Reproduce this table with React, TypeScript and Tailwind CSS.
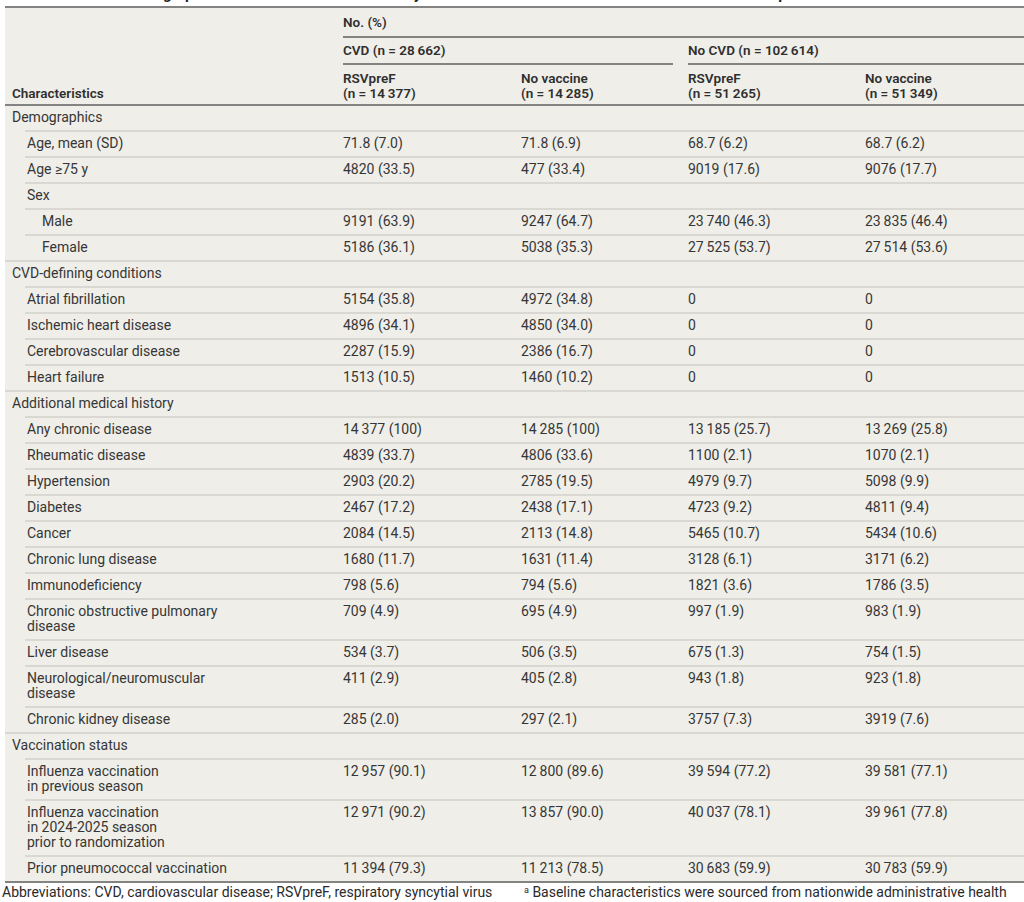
import React from "react";

type R = {
  label: string[];
  level: 1 | 2;
  v?: string[];
  full?: boolean;
  lastTable?: boolean;
};

type Section = { title: string; rows: R[] };

const t = (s: string) => s.replace(/(\d) (\d)/g, "$1\u2009$2");

const sections: Section[] = [
  {
    title: "Demographics",
    rows: [
      { label: ["Age, mean (SD)"], level: 1, v: ["71.8 (7.0)", "71.8 (6.9)", "68.7 (6.2)", "68.7 (6.2)"] },
      { label: ["Age \u226575 y"], level: 1, v: ["4820 (33.5)", "477 (33.4)", "9019 (17.6)", "9076 (17.7)"] },
      { label: ["Sex"], level: 1 },
      { label: ["Male"], level: 2, v: ["9191 (63.9)", "9247 (64.7)", "23 740 (46.3)", "23 835 (46.4)"] },
      { label: ["Female"], level: 2, v: ["5186 (36.1)", "5038 (35.3)", "27 525 (53.7)", "27 514 (53.6)"], full: true },
    ],
  },
  {
    title: "CVD-defining conditions",
    rows: [
      { label: ["Atrial fibrillation"], level: 1, v: ["5154 (35.8)", "4972 (34.8)", "0", "0"] },
      { label: ["Ischemic heart disease"], level: 1, v: ["4896 (34.1)", "4850 (34.0)", "0", "0"] },
      { label: ["Cerebrovascular disease"], level: 1, v: ["2287 (15.9)", "2386 (16.7)", "0", "0"] },
      { label: ["Heart failure"], level: 1, v: ["1513 (10.5)", "1460 (10.2)", "0", "0"], full: true },
    ],
  },
  {
    title: "Additional medical history",
    rows: [
      { label: ["Any chronic disease"], level: 1, v: ["14 377 (100)", "14 285 (100)", "13 185 (25.7)", "13 269 (25.8)"] },
      { label: ["Rheumatic disease"], level: 1, v: ["4839 (33.7)", "4806 (33.6)", "1100 (2.1)", "1070 (2.1)"] },
      { label: ["Hypertension"], level: 1, v: ["2903 (20.2)", "2785 (19.5)", "4979 (9.7)", "5098 (9.9)"] },
      { label: ["Diabetes"], level: 1, v: ["2467 (17.2)", "2438 (17.1)", "4723 (9.2)", "4811 (9.4)"] },
      { label: ["Cancer"], level: 1, v: ["2084 (14.5)", "2113 (14.8)", "5465 (10.7)", "5434 (10.6)"] },
      { label: ["Chronic lung disease"], level: 1, v: ["1680 (11.7)", "1631 (11.4)", "3128 (6.1)", "3171 (6.2)"] },
      { label: ["Immunodeficiency"], level: 1, v: ["798 (5.6)", "794 (5.6)", "1821 (3.6)", "1786 (3.5)"] },
      { label: ["Chronic obstructive pulmonary", "disease"], level: 1, v: ["709 (4.9)", "695 (4.9)", "997 (1.9)", "983 (1.9)"] },
      { label: ["Liver disease"], level: 1, v: ["534 (3.7)", "506 (3.5)", "675 (1.3)", "754 (1.5)"] },
      { label: ["Neurological/neuromuscular", "disease"], level: 1, v: ["411 (2.9)", "405 (2.8)", "943 (1.8)", "923 (1.8)"] },
      { label: ["Chronic kidney disease"], level: 1, v: ["285 (2.0)", "297 (2.1)", "3757 (7.3)", "3919 (7.6)"], full: true },
    ],
  },
  {
    title: "Vaccination status",
    rows: [
      { label: ["Influenza vaccination", "in previous season"], level: 1, v: ["12 957 (90.1)", "12 800 (89.6)", "39 594 (77.2)", "39 581 (77.1)"] },
      { label: ["Influenza vaccination", "in 2024-2025 season", "prior to randomization"], level: 1, v: ["12 971 (90.2)", "13 857 (90.0)", "40 037 (78.1)", "39 961 (77.8)"] },
      { label: ["Prior pneumococcal vaccination"], level: 1, v: ["11 394 (79.3)", "11 213 (78.5)", "30 683 (59.9)", "30 783 (59.9)"], full: true, lastTable: true },
    ],
  },
];

function Lines({ lines }: { lines: string[] }) {
  return (
    <>
      {lines.map((l, i) => (
        <div key={i} className="whitespace-nowrap">{t(l)}</div>
      ))}
    </>
  );
}

function DataRow({ r }: { r: R }) {
  let wrap = "";
  if (r.lastTable) {
    wrap = "grid grid-cols-[331px_178px_167px_177px_1fr] border-b-2 border-[#838381]";
  } else if (r.full) {
    wrap = "grid grid-cols-[331px_178px_167px_177px_1fr] border-b-2 border-[#d9d8d2]";
  } else {
    wrap = "ml-[20px] grid grid-cols-[311px_178px_167px_177px_1fr] border-b-2 border-[#d9d8d2]";
  }
  let lab = "";
  if (r.full) lab = r.level === 2 ? "pl-[37px]" : "pl-[22px]";
  else lab = r.level === 2 ? "pl-[17px]" : "pl-[2px]";
  const vals = r.v ?? ["", "", "", ""];
  return (
    <div className={wrap}>
      <div className={`${lab} pt-[4px] pb-[5px]`}>
        <Lines lines={r.label} />
      </div>
      {vals.map((v, i) => (
        <div key={i} className="pl-[7px] pt-[4px] pb-[5px] whitespace-nowrap">
          {t(v)}
        </div>
      ))}
    </div>
  );
}

export default function App() {
  return (
    <div
      className="w-[1024px] h-[902px] overflow-hidden bg-white text-[#363636] text-[14px] leading-[15px]"
      style={{ fontFamily: 'Roboto, "Open Sans", sans-serif' }}
    >
      <div className="h-[6px] overflow-hidden pl-[5px]">
        <div className="-mt-[15px] text-[15px] leading-[18px] font-bold text-[#222] whitespace-nowrap">
          Table 1. Baseline Demographic and Clinical Characteristics by Cardiovascular Disease Status and Vaccination Group
        </div>
      </div>
      <div className="ml-[5px] bg-[#efeee9] border-t-2 border-[#838381]">
        {/* header */}
        <div className="grid grid-cols-[331px_178px_167px_177px_1fr] border-b-2 border-[#838381] font-semibold text-[13.5px] text-[#2f2f2f]">
          <div className="row-span-3 flex items-end pl-[7px] pb-[3px]">Characteristics</div>
          <div className="col-span-4 ml-[7px] pt-[7px] pb-[6px] border-b-2 border-[#838381]">No. (%)</div>
          <div className="col-span-2 ml-[7px] mr-[8px] pt-[5px] pb-[5px] border-b-2 border-[#838381]">
            {t("CVD (n = 28 662)")}
          </div>
          <div className="col-span-2 ml-[7px] pt-[5px] pb-[5px] border-b-2 border-[#838381]">
            {t("No CVD (n = 102 614)")}
          </div>
          <div className="pl-[7px] pt-[6px] pb-[3px]">
            <div>RSVpreF</div>
            <div>{t("(n = 14 377)")}</div>
          </div>
          <div className="pl-[7px] pt-[6px] pb-[3px]">
            <div>No vaccine</div>
            <div>{t("(n = 14 285)")}</div>
          </div>
          <div className="pl-[7px] pt-[6px] pb-[3px]">
            <div>RSVpreF</div>
            <div>{t("(n = 51 265)")}</div>
          </div>
          <div className="pl-[7px] pt-[6px] pb-[3px]">
            <div>No vaccine</div>
            <div>{t("(n = 51 349)")}</div>
          </div>
        </div>
        {sections.map((s) => (
          <div key={s.title}>
            <div>
              <div className="pl-[7px] pt-[4px] pb-[5px]">{s.title}</div>
              <div className="ml-[20px] h-[2px] bg-[#d9d8d2]" />
            </div>
            {s.rows.map((r, i) => (
              <DataRow key={i} r={r} />
            ))}
          </div>
        ))}
      </div>
      <div className="grid grid-cols-[522px_1fr] pl-[2px] pt-[1px] text-[14px] leading-[16px] text-[#2a2a2a] whitespace-nowrap">
        <div>Abbreviations: CVD, cardiovascular disease; RSVpreF, respiratory syncytial virus</div>
        <div>
          <sup className="text-[9px]">a</sup> Baseline characteristics were sourced from nationwide administrative health
        </div>
      </div>
    </div>
  );
}
